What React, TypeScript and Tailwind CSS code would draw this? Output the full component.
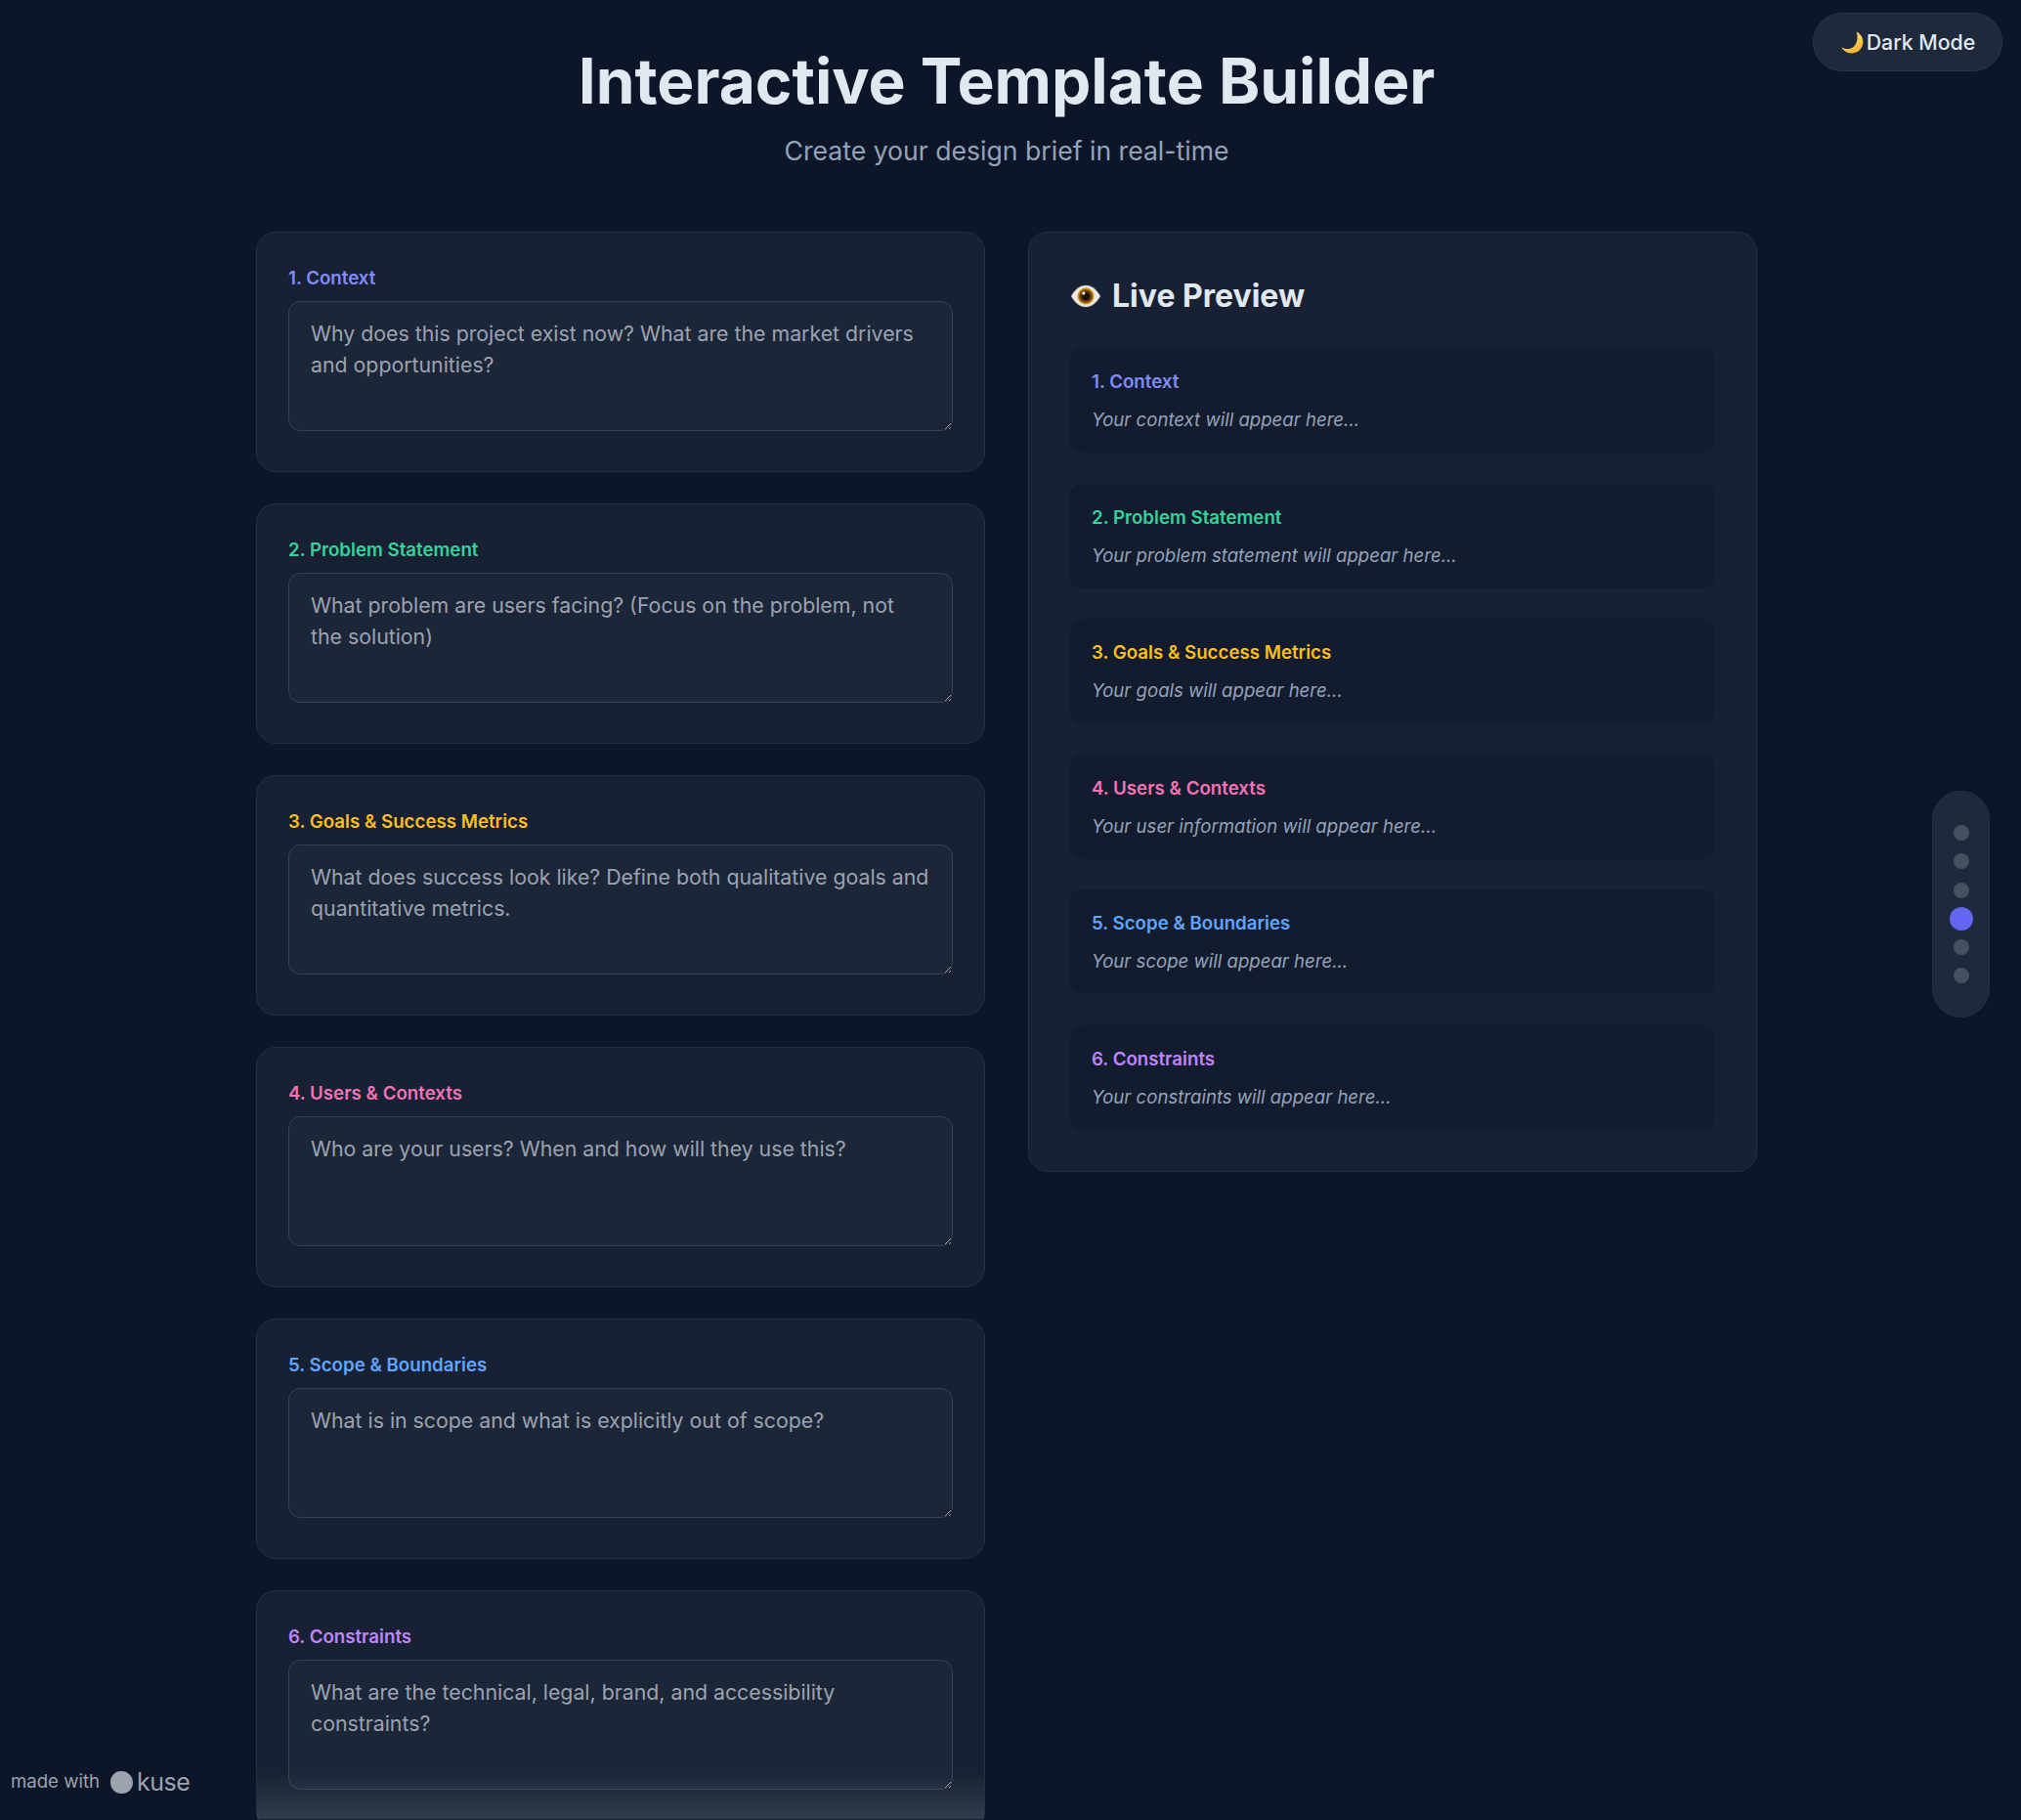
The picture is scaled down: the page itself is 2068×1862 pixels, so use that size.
const sections = [
  { title: "1. Context", color: "text-[#818cf8]", hint: "Why does this project exist now? What are the market drivers and opportunities?", empty: "Your context will appear here..." },
  { title: "2. Problem Statement", color: "text-[#34d399]", hint: "What problem are users facing? (Focus on the problem, not the solution)", empty: "Your problem statement will appear here..." },
  { title: "3. Goals & Success Metrics", color: "text-[#fbbf24]", hint: "What does success look like? Define both qualitative goals and quantitative metrics.", empty: "Your goals will appear here..." },
  { title: "4. Users & Contexts", color: "text-[#f472b6]", hint: "Who are your users? When and how will they use this?", empty: "Your user information will appear here..." },
  { title: "5. Scope & Boundaries", color: "text-[#60a5fa]", hint: "What is in scope and what is explicitly out of scope?", empty: "Your scope will appear here..." },
  { title: "6. Constraints", color: "text-[#c084fc]", hint: "What are the technical, legal, brand, and accessibility constraints?", empty: "Your constraints will appear here..." },
];

function MoonIcon() {
  return (
    <svg width="25" height="25" viewBox="0 0 24 24" className="shrink-0">
      <defs>
        <linearGradient id="moon" x1="0.3" y1="0" x2="0.7" y2="1">
          <stop offset="0" stopColor="#ffe680" />
          <stop offset="1" stopColor="#efb22e" />
        </linearGradient>
      </defs>
      <path d="M16 1.500c5 2.500 7.500 7.500 6 13-1.500 5.500-6.500 8.500-12 8-3.500-.3-7-2.500-9-6 3 1.800 7.500 2.500 11 .5 4.500-2.500 6-10 4-15.500z" fill="url(#moon)" />
    </svg>
  );
}

function EyeIcon() {
  return (
    <svg width="32" height="26" viewBox="0 0 32 26" className="shrink-0">
      <path d="M1 13C6 4.500 11 2 16 2s10 2.500 15 11c-5 8.500-10 11-15 11S6 21.500 1 13z" fill="#ece8e4" stroke="#8b8d96" strokeOpacity="0.5" />
      <circle cx="16" cy="13" r="8.500" fill="#c8920f" />
      <circle cx="16" cy="13" r="6.800" fill="#6b3d10" />
      <circle cx="16" cy="13" r="4.300" fill="#1e0f08" />
      <circle cx="13.800" cy="10" r="1.700" fill="#f5e6d8" />
    </svg>
  );
}

export default function App() {
  return (
    <div className="relative h-[1862px] overflow-hidden bg-[#0d1629] font-['Inter',sans-serif] text-[#e2e8f0]">
      <div className="w-[2060px]">
        <header className="pt-[44px] text-center">
          <h1 className="text-[64px] font-bold leading-[77px] text-[#e2e8f0]">Interactive Template Builder</h1>
          <p className="mt-[14px] text-[26.600px] leading-[38px] text-[#94a3b8]">Create your design brief in real-time</p>
        </header>

        <main className="mx-auto mt-[64px] grid w-[1536px] grid-cols-2 items-start gap-[44px]">
          <div className="flex flex-col gap-[32px]">
            {sections.map((s, i) => (
              <section key={s.title} className="relative rounded-[20px] border border-[#242f42] bg-[#172133] px-[32px] pb-[41px] pt-[34.500px]">
                <h2 className={`mb-[11.500px] text-[18.700px] font-semibold leading-[24px] ${s.color}`}>{s.title}</h2>
                <textarea
                  readOnly
                  placeholder={s.hint}
                  className="block h-[133px] w-full rounded-[12px] border border-[#334155] bg-[#1c2639] px-[22px] py-[16px] text-[21.300px] leading-[32px] [color-scheme:dark] placeholder:text-[#9ca3af]"
                />
                {i === 5 && (
                  <div className="absolute inset-x-0 top-[183px] h-[50px] bg-gradient-to-b from-transparent to-white/[0.12]" />
                )}
              </section>
            ))}
          </div>

          <aside className="rounded-[20px] border border-[#242f42] bg-[#172133] p-[42px]">
            <h2 className="mb-[30px] flex items-center gap-[11px] text-[32px] font-bold leading-[46px] text-[#e2e8f0]">
              <EyeIcon />
              Live Preview
            </h2>
            <div className="flex flex-col gap-[31.500px]">
              {sections.map((s) => (
                <div key={s.title} className="rounded-[12px] bg-[#131c2f] px-[22px] pb-[19px] pt-[23px]">
                  <h3 className={`mb-[11px] text-[18.700px] font-semibold leading-[24px] ${s.color}`}>{s.title}</h3>
                  <p className="text-[18.600px] italic leading-[30px] text-[#94a3b8]">{s.empty}</p>
                </div>
              ))}
            </div>
          </aside>
        </main>
      </div>

      <button className="absolute right-[19px] top-[13px] flex h-[60px] w-[194px] items-center justify-center gap-[2px] rounded-full border border-[#2a3648] bg-[#1e293b] pt-[1px] text-[21.300px] font-medium text-[#e2e8f0]">
        <MoonIcon />
        <span>Dark Mode</span>
      </button>

      <nav className="absolute left-[1977px] top-[809px] flex h-[232px] w-[59px] flex-col items-center gap-[13.300px] rounded-full border border-[#263042] bg-[#1e293b] pt-[34px]">
        {[0, 1, 2, 3, 4, 5].map((i) => (
          <span key={i} className={i === 3 ? "h-[16px] w-[16px] scale-150 rounded-full bg-[#6366f1]" : "h-[16px] w-[16px] rounded-full bg-[#475060]"} />
        ))}
      </nav>

      <div className="absolute bottom-[25px] left-[11px] flex items-center text-[18.600px] text-[#9ca3af]">
        <span>made with</span>
        <span className="ml-[11px] h-[23px] w-[23px] rounded-[48%_52%_50%_50%] bg-[#9ca3af]" />
        <span className="ml-[4px] text-[25px] leading-[26px] tracking-[-0.500px]">
          <span className="[font-variant:small-caps]">k</span>use
        </span>
      </div>
    </div>
  );
}
